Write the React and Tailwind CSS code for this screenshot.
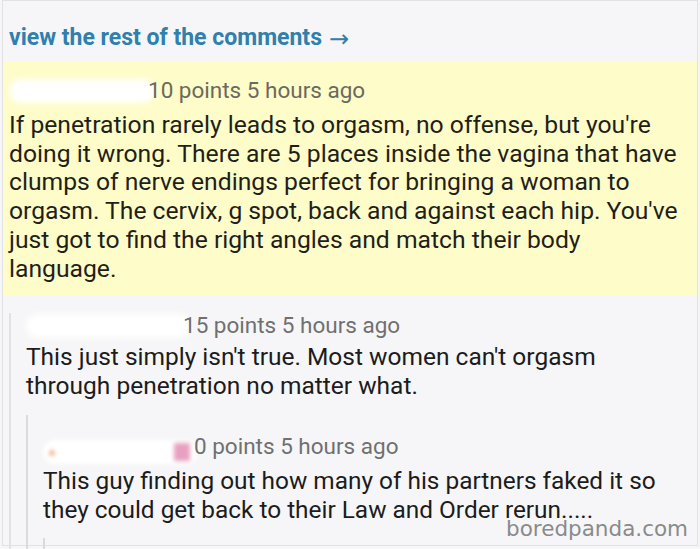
export default function App() {
  const font = { fontFamily: "Roboto, 'Noto Sans', sans-serif" };

  return (
    <div className="relative h-[549px] w-[700px] overflow-hidden bg-[#f6f6f8]" style={font}>
      <div className="mx-[2px] h-[546px] border-x border-b border-t border-[#e2e2e4]">
        {/* link to more comments */}
        <div className="flex h-[61px] items-center pl-[6px] pt-[14px]">
          <span className="text-[23px] font-bold text-[#2f80ad]">view the rest of the comments</span>
          <span
            className="ml-[7px] text-[24px] text-[#2f80ad]"
            style={{ fontFamily: "'DejaVu Sans', sans-serif" }}
          >
            →
          </span>
        </div>

        {/* highlighted comment */}
        <div className="h-[234px] bg-[#fefcc9] pl-[6px] pt-[16px]">
          <div className="flex h-[26px] items-center text-[22.5px] text-[#6a6a5e]">
            <span className="mr-[-7px] inline-block h-[24px] w-[146px] rounded-full bg-white blur-[3px]" />
            <span className="relative">10 points 5 hours ago</span>
          </div>
          <p className="mt-[7px] whitespace-nowrap text-[24.7px] leading-[28.7px] text-[#1f1f1a]">
            If penetration rarely leads to orgasm, no offense, but you're
            <br />
            doing it wrong. There are 5 places inside the vagina that have
            <br />
            clumps of nerve endings perfect for bringing a woman to
            <br />
            orgasm. The cervix, g spot, back and against each hip. You've
            <br />
            just got to find the right angles and match their body
            <br />
            language.
          </p>
        </div>

        {/* first reply */}
        <div className="ml-[6px] border-l-2 border-[#e2e2e4] pl-[15px]">
          <div className="mt-[17px] flex h-[26px] items-center text-[22.5px] text-[#707070]">
            <span className="mr-[-8px] inline-block h-[24px] w-[165px] rounded-full bg-white blur-[3px]" />
            <span className="relative">15 points 5 hours ago</span>
          </div>
          <p className="mt-[3px] whitespace-nowrap text-[24.5px] leading-[29px] text-[#1c1c1c]">
            This just simply isn't true. Most women can't orgasm
            <br />
            through penetration no matter what.
          </p>

          {/* second reply */}
          <div className="mt-[15px] border-l-2 border-[#dadadc] pl-[15px]">
            <div className="flex h-[49px] items-end text-[22.5px] text-[#707070]">
              <span className="relative mr-[-4px] inline-flex h-[24px] w-[155px] items-center rounded-full bg-white blur-[2px]">
                <span className="ml-[6px] h-0 w-0 border-x-[3px] border-b-[6px] border-x-transparent border-b-[#e0905a]" />
                <span className="ml-auto mr-[8px] h-[18px] w-[16px] bg-[#e8a0c0]" />
              </span>
              <span className="relative">0 points 5 hours ago</span>
            </div>
            <p className="mt-[2px] whitespace-nowrap text-[24.4px] leading-[29px] text-[#1c1c1c]">
              This guy finding out how many of his partners faked it so
              <br />
              they could get back to their Law and Order rerun.....
            </p>
            <div className="mt-[14px] h-[20px] border-l-2 border-[#dadadc]" />
          </div>
        </div>
      </div>

      {/* watermark */}
      <div
        className="absolute left-[506px] top-[513px] text-[21.5px] text-[#8a8a8a]"
        style={{ fontFamily: "'DejaVu Sans', sans-serif" }}
      >
        boredpanda.com
      </div>
    </div>
  );
}
